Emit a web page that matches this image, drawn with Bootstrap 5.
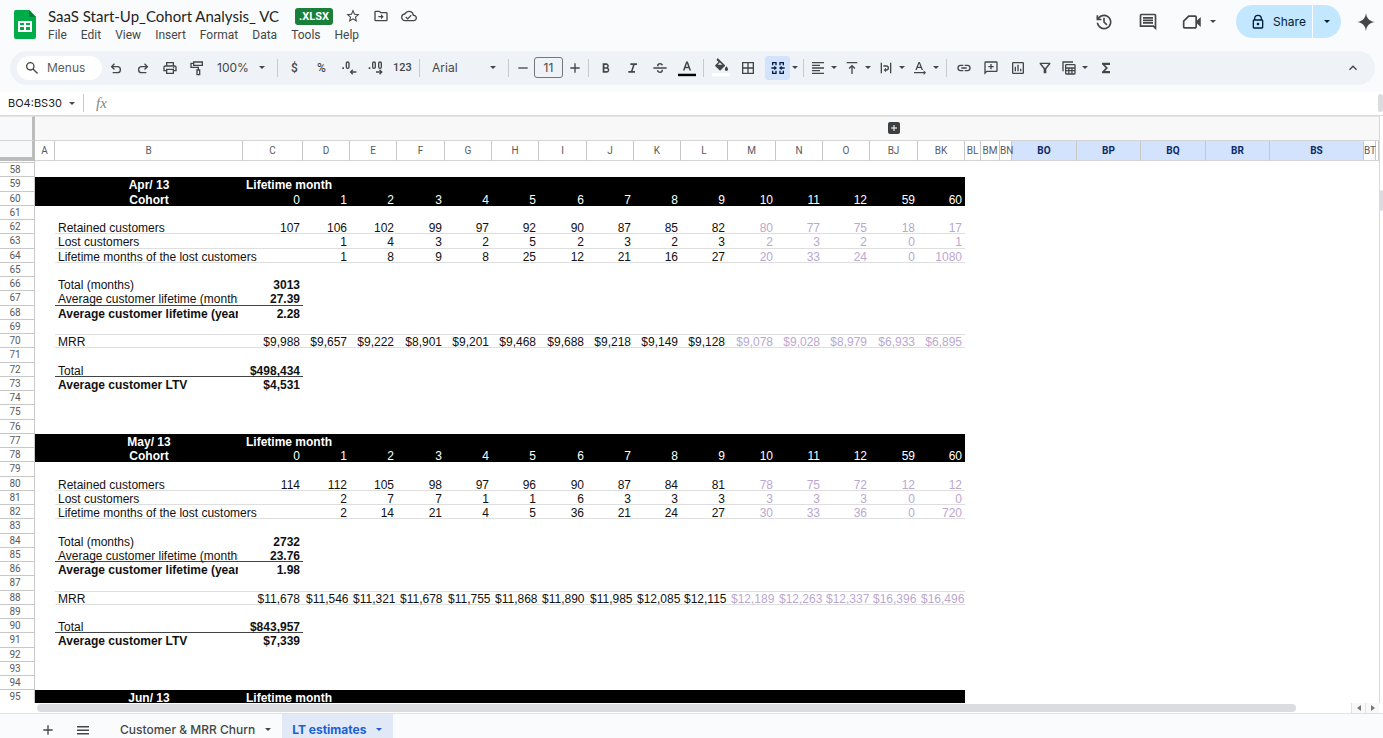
<!DOCTYPE html>
<html lang="en">
<head>
<meta charset="utf-8">
<meta name="viewport" content="width=device-width, initial-scale=1">
<title>SaaS Start-Up_Cohort Analysis_ VC</title>
<link href="https://cdn.jsdelivr.net/npm/bootstrap@5.3.0/dist/css/bootstrap.min.css" rel="stylesheet">
<style>
  :root { --ink: #444746; --line: #c8c8c8; --ui: Roboto, "Liberation Sans", sans-serif; }
  body { font-family: var(--ui); font-size: 13px; line-height: 16px; color: var(--ink); background: #f9fbfd; }
  button, select, input { font-family: inherit; color: inherit; }
  svg { display: block; fill: currentColor; flex: none; }
  .ic { width: 16px; height: 16px; }
  .ic-lg { width: 20px; height: 20px; }
  .caret { width: 6px; height: 3px; }
  .plain { border: 0; background: none; padding: 0; display: flex; align-items: center; justify-content: center; }

  .topbar { height: 51px; padding: 5px 8px 0 14px; }
  .doc-title { font-family: Lato, sans-serif; font-size: 15px; line-height: 22px; font-weight: 400; color: #1f1f1f; margin: 0; }
  .filetype { background: #188038; font-size: 11px; line-height: 17px; border-radius: 3px; padding: 0 4px; font-weight: 700; color: #fff; }
  .menus { gap: 14px; font-size: 12px; line-height: 16px; }
  .menus a { color: var(--ink); text-decoration: none; }
  .share { background: #c2e7ff; color: #001d35; border-radius: 17px; height: 33px; overflow: hidden; font-family: Inter, sans-serif; font-size: 12px; font-weight: 500; }
  .share-main { width: 76px; gap: 7px; padding-left: 8px; }
  .share-more { width: 29px; border-left: 1px solid #f9fbfd; }

  .tools { height: 34px; margin: 0 8px 7px 10px; padding: 0 9px 0 7px; background: #eff3f8; border-radius: 17px; }
  .search { width: 85px; height: 24px; background: #fff; border-radius: 12px; padding-left: 7px; gap: 7px; }
  .search input { width: 48px; border: 0; background: none; padding: 0; font-family: Inter, sans-serif; font-size: 12px; outline: 0; }
  .search input::placeholder { color: #5b5e5d; opacity: 1; }
  .tool { width: 27px; height: 24px; font-size: 12px; font-weight: 500; border-radius: 3px; }
  .tool.small-digits { font-size: 11px; }
  .tool.step { width: 21px; }
  .tool.dd { width: 34px; gap: 5px; justify-content: start; padding-left: 3px; }
  .tool.on { width: 25px; background: #d3e3fd; color: #041e49; }
  .tool.only-caret { width: 10px; }
  .sep { width: 1px; height: 18px; margin: 0 3px; background: #c7c9cc; }
  .pick { appearance: none; border: 0; height: 24px; padding: 0 0 0 7px; font-family: Inter, sans-serif; font-size: 12px;
    background: url("data:image/svg+xml,%3Csvg xmlns='http://www.w3.org/2000/svg' viewBox='0 0 8 4'%3E%3Cpath fill='%23444746' d='M0 0h8L4 4z'/%3E%3C/svg%3E") no-repeat right 9px center / 6px 3px; }
  .pick-zoom { width: 64px; }
  .pick-font { width: 82px; padding-left: 9px; }
  .size-box { width: 29px; height: 21px; margin: 0 1px; border: 1px solid #747775; border-radius: 3px; background: none; text-align: center; padding: 0; font-family: Inter, sans-serif; font-size: 12px; }

  .formula { height: 24px; background: #fff; border-bottom: 1px solid #d9dadb; padding-left: 8px; }
  .formula input { width: 61px; border: 0; padding: 0; font-family: Inter, sans-serif; font-size: 11px; color: #202124; outline: 0; }
  .fx { font: italic 15px "Liberation Serif", serif; color: #80868b; }
  .thumb { background: #dadce0; border-radius: 5px; }
  .formula .thumb { width: 5px; height: 18px; }

  .grid-wrap { min-height: 0; background: #fff; }
  .rail { width: 4px; border-left: 1px solid #d9d9d9; background: #fff; }
  .rail .thumb { height: 21px; margin-top: 74px; }
  .sheet { table-layout: fixed; width: 100%; border-collapse: separate; border-spacing: 0; }
  .sheet th, .sheet td { padding: 0; }
  .sheet thead th { font-size: 10px; line-height: 19px; font-weight: 400; color: #575b5f; text-align: center; white-space: nowrap; }
  .groups th { height: 25px; background: #f8f8f8; border-bottom: 1px solid #d4d4d4; border-top: 1px solid #e4e4e4; }
  .letters th { height: 20px; background: #fff; border-right: 1px solid var(--line); border-bottom: 1px solid #d4d4d4; }
  .sheet .letters th.sel { background: #d3e3fd; color: #0b2a66; font-weight: 700; }
  .sheet thead th.corner { background: #f8f9fa; border-right: 3px solid #bcbcbc; }
  .letters th.corner { border-bottom: 4px solid #bcbcbc; }
  .sheet tbody { font-family: "Liberation Sans", sans-serif; font-size: 12px; color: #111; }
  .sheet tbody tr { height: 14px; }
  .sheet tbody tr.tall { height: 15px; }
  .sheet tbody tr.sliver { height: 2px; }
  .num { font-family: var(--ui); font-size: 10px; line-height: 13px; font-weight: 400; color: #575b5f; text-align: center; border-right: 1px solid var(--line); border-bottom: 1px solid var(--line); }
  .sheet .num { padding-right: 4px; }
  .sliver .num { line-height: 1px; }
  .cell { height: 14px; line-height: 17px; padding: 0 3px; white-space: nowrap; }
  .val .cell { text-align: right; }
  .mid .cell { text-align: center; }
  .cut .cell { overflow-x: clip; margin-right: 5px; }
  .ink td { background: #000; color: #fff; }
  .faint { color: #baa8d0; }
  .under { box-shadow: inset 0 -1px #dedede; }
  .over { box-shadow: inset 0 1px #dedede, inset 0 -1px #dedede; }
  .rule { box-shadow: inset 0 -1px #444; }
  .plus-mark { width: 12px; height: 12px; margin: 0 auto; color: #3c4043; }

  .hscroll { height: 10px; background: #fff; padding-left: 37px; }
  .hscroll .thumb { width: calc(100% - 55px); height: 8px; }
  .arrow { width: 14px; height: 10px; border-left: 1px solid #e3e3e3; background: #f8f8f8; color: #777; }
  .tabs { height: 25px; border-top: 1px solid #dfe1e4; font-family: Inter, sans-serif; padding-left: 34px; }
  .tabs .plain { font-size: 12px; font-weight: 500; height: 24px; padding-top: 7px; }
  .tabs .w { width: 27px; }
  .tabs .tab { gap: 10px; padding-left: 10px; padding-right: 11px; }
  .tabs .tab.current { background: #e1e9f7; color: #1a5fd0; font-weight: 700; }
</style>
</head>
<body class="vh-100 d-flex flex-column overflow-hidden">
<svg width="0" height="0" class="position-absolute" aria-hidden="true">
  <symbol id="caret" viewBox="0 0 8 4"><path d="M0 0h8L4 4z"/></symbol>
</svg>

<header class="topbar d-flex align-items-start">
  <svg class="mt-1" width="22" height="31" viewBox="0 0 22 31" aria-label="Sheets"><path fill="#00ac47" d="M2 1h13l7 7v20a2 2 0 0 1-2 2H2a2 2 0 0 1-2-2V3a2 2 0 0 1 2-2z"/><path fill="#00832d" d="M15 1l7 7h-5a2 2 0 0 1-2-2z"/><path fill="#fff" fill-rule="evenodd" d="M4 12h14v11H4zm2 2v2h4v-2zm6 0v2h4v-2zm-6 4v3h4v-3zm6 0v3h4v-3z"/></svg>
  <div class="ms-2 ps-1">
    <div class="d-flex align-items-center">
      <h1 class="doc-title">SaaS Start-Up_Cohort Analysis_ VC</h1>
      <span class="filetype ms-3">.XLSX</span>
      <button class="plain ms-2 ps-1" aria-label="Star"><svg width="16" height="16" viewBox="0 0 24 24"><path d="M22 9.240l-7.190-.62L12 2 9.190 8.630 2 9.240l5.460 4.730L5.820 21 12 17.270 18.180 21l-1.630-7.030L22 9.240zM12 15.400l-3.760 2.270 1-4.280-3.320-2.880 4.380-.38L12 6.100l1.710 4.040 4.380.38-3.320 2.880 1 4.280L12 15.400z"/></svg></button>
      <button class="plain ms-2 ps-1" aria-label="Move"><svg width="16" height="16" viewBox="0 0 24 24"><path d="M20 6h-8l-2-2H4a2 2 0 0 0-2 2v12a2 2 0 0 0 2 2h16a2 2 0 0 0 2-2V8a2 2 0 0 0-2-2zm0 12H4V6h5.200l2 2H20zm-8-1l4-4-4-4v3H8v2h4z"/></svg></button>
      <button class="plain ms-2 ps-1" aria-label="Saved to Drive"><svg width="16" height="16" viewBox="0 0 24 24"><path d="M19.350 10.040A7.490 7.490 0 0 0 12 4C9.110 4 6.600 5.640 5.350 8.040A5.990 5.990 0 0 0 0 14c0 3.310 2.690 6 6 6h13c2.760 0 5-2.240 5-5 0-2.640-2.050-4.780-4.650-4.960zM19 18H6c-2.210 0-4-1.790-4-4 0-2.050 1.530-3.760 3.560-3.970l1.070-.11.5-.95A5.470 5.470 0 0 1 12 6c2.620 0 4.880 1.860 5.390 4.430l.3 1.500 1.530.11A2.980 2.980 0 0 1 22 15c0 1.650-1.350 3-3 3zm-9-3.180l-2.090-2.090L6.500 14.140 10 17.650l6.010-6.010-1.410-1.410z"/></svg></button>
    </div>
    <nav class="menus d-flex"><a href="#">File</a><a href="#">Edit</a><a href="#">View</a><a href="#">Insert</a><a href="#">Format</a><a href="#">Data</a><a href="#">Tools</a><a href="#">Help</a></nav>
  </div>
  <div class="d-flex align-items-center ms-auto">
    <button class="plain me-4" aria-label="Version history"><svg class="ic-lg" viewBox="0 0 24 24"><path d="M12 21a9 9 0 0 1-8.950-8h2.050A7 7 0 1 0 6.250 8H9v2H3V4h2v2.350A9 9 0 1 1 12 21zm2.800-4.800L11 12.400V7h2v4.600l3.200 3.200z"/></svg></button>
    <button class="plain me-4" aria-label="Comments"><svg class="ic-lg" viewBox="0 0 24 24"><path d="M6 14h12v-2H6zm0-3h12V9H6zm0-3h12V6H6zM2 18V4a2 2 0 0 1 2-2h16a2 2 0 0 1 2 2v18l-4-4zm2-2h14.800l1.200 1.200V4H4z"/></svg></button>
    <button class="plain me-3 gap-2 pe-1" aria-label="Join a call"><svg class="ic-lg" viewBox="0 0 24 24"><path fill="none" stroke="currentColor" stroke-width="2" stroke-linejoin="round" d="M8 5h8a1 1 0 0 1 1 1v12a1 1 0 0 1-1 1H3a1 1 0 0 1-1-1v-7z"/><path d="M17 11l5.500-5v12L17 13z"/></svg><svg class="caret"><use href="#caret"/></svg></button>
    <div class="share d-flex me-3">
      <button class="plain share-main"><svg width="16" height="16" viewBox="0 0 24 24"><path fill-rule="evenodd" d="M6 8V7a6 6 0 0 1 12 0v1a2 2 0 0 1 2 2v10a2 2 0 0 1-2 2H6a2 2 0 0 1-2-2V10a2 2 0 0 1 2-2zm2 0h8V7a4 4 0 0 0-8 0zm-2 2v10h12V10zm6 3a2 2 0 1 1 0 4 2 2 0 0 1 0-4z"/></svg>Share</button>
      <button class="plain share-more" aria-label="Share options"><svg class="caret"><use href="#caret"/></svg></button>
    </div>
    <button class="plain" aria-label="Gemini"><svg width="18" height="18" viewBox="0 0 24 24"><path d="M12 0c1 7.500 4.500 11 12 12-7.500 1-11 4.500-12 12-1-7.500-4.500-11-12-12 7.500-1 11-4.500 12-12z"/></svg></button>
  </div>
</header>

<div class="tools d-flex align-items-center" role="toolbar">
  <label class="search d-flex align-items-center"><svg class="ic" viewBox="0 0 24 24"><path d="M19.600 21l-6.300-6.300A6.500 6.500 0 1 1 14.700 13.300L21 19.600zM9.500 14a4.500 4.500 0 1 0 0-9 4.500 4.500 0 0 0 0 9z"/></svg><input type="text" placeholder="Menus" aria-label="Search the menus"></label>
  <button class="plain tool" aria-label="Undo"><svg class="ic" viewBox="0 0 24 24"><path d="M7 20v-2h7.100a3.500 3.500 0 0 0 0-7H7.800l2.600 2.600L9 15l-5-5 5-5 1.400 1.400L7.800 9h6.300a5.500 5.500 0 0 1 0 11z"/></svg></button>
  <button class="plain tool" aria-label="Redo"><svg class="ic" viewBox="0 0 24 24"><path d="M17 20v-2H9.900a3.500 3.500 0 0 1 0-7h6.300l-2.600 2.600L15 15l5-5-5-5-1.400 1.400L16.200 9H9.900a5.500 5.500 0 0 0 0 11z"/></svg></button>
  <button class="plain tool" aria-label="Print"><svg class="ic" viewBox="0 0 24 24"><path fill-rule="evenodd" d="M6 3h12v5h1a3 3 0 0 1 3 3v6h-4v4H6v-4H2v-6a3 3 0 0 1 3-3h1zm2 2v3h8V5zM5 10a1 1 0 0 0-1 1v4h2v-2h12v2h2v-4a1 1 0 0 0-1-1zm3 5v4h8v-4zm9.500-4.500a1 1 0 1 1 0 2 1 1 0 0 1 0-2z"/></svg></button>
  <button class="plain tool" aria-label="Paint format"><svg class="ic" viewBox="0 0 24 24"><path fill="none" stroke="currentColor" stroke-width="2" d="M7 3h13v5H7zM7 5H3v6h11v4M12 15h4v7h-4z"/></svg></button>
  <select class="pick pick-zoom" aria-label="Zoom"><option>100%</option></select>
  <span class="sep"></span>
  <button class="plain tool">$</button>
  <button class="plain tool">%</button>
  <button class="plain tool" aria-label="Decrease decimal places"><svg class="ic" viewBox="0 0 24 24"><path fill-rule="evenodd" d="M2 11h2.500v2.500H2zM10 2a3 3 0 0 1 3 3v5.500a3 3 0 0 1-6 0V5a3 3 0 0 1 3-3zm0 2a1 1 0 0 0-1 1v5.500a1 1 0 0 0 2 0V5a1 1 0 0 0-1-1zM17 14l1.400 1.400L16.800 17H23v2h-6.200l1.600 1.600L17 22l-4-4z"/></svg></button>
  <button class="plain tool" aria-label="Increase decimal places"><svg class="ic" viewBox="0 0 24 24"><path fill-rule="evenodd" d="M1 11h2.500v2.500H1zM9 2a3 3 0 0 1 3 3v5.500a3 3 0 0 1-6 0V5a3 3 0 0 1 3-3zm0 2a1 1 0 0 0-1 1v5.500a1 1 0 0 0 2 0V5a1 1 0 0 0-1-1zM18 2a3 3 0 0 1 3 3v5.500a3 3 0 0 1-6 0V5a3 3 0 0 1 3-3zm0 2a1 1 0 0 0-1 1v5.500a1 1 0 0 0 2 0V5a1 1 0 0 0-1-1zM18 14l4 4-4 4-1.400-1.400 1.600-1.600H12v-2h6.200l-1.600-1.600z"/></svg></button>
  <button class="plain tool small-digits">123</button>
  <span class="sep"></span>
  <select class="pick pick-font" aria-label="Font"><option>Arial</option></select>
  <span class="sep"></span>
  <button class="plain tool step" aria-label="Decrease font size"><svg class="ic" viewBox="0 0 24 24"><path d="M5 11h14v2H5z"/></svg></button>
  <input class="size-box" type="text" value="11" aria-label="Font size">
  <button class="plain tool step" aria-label="Increase font size"><svg class="ic" viewBox="0 0 24 24"><path d="M5 11h6V5h2v6h6v2h-6v6h-2v-6H5z"/></svg></button>
  <span class="sep"></span>
  <button class="plain tool" aria-label="Bold"><svg class="ic" viewBox="0 0 24 24"><path fill-rule="evenodd" d="M7 5h5.500a4 4 0 0 1 2.700 6.700A4 4 0 0 1 13 19H7zm2.700 2.400v3.400h2.700a1.700 1.700 0 0 0 0-3.400zm0 5.700v3.500h3.200a1.700 1.700 0 0 0 0-3.500z"/></svg></button>
  <button class="plain tool" aria-label="Italic"><svg class="ic" viewBox="0 0 24 24"><path d="M5 19v-2.500h4L12 7.500H8V5h10v2.500h-3.500l-3 9H15V19z"/></svg></button>
  <button class="plain tool" aria-label="Strikethrough"><svg class="ic" viewBox="0 0 24 24"><path d="M2 11h20v2H2zM7.500 9.500C7 6.500 9 4.500 12 4.500c2.300 0 4 1.100 4.600 3.100l-2.200.8c-.3-1.100-1.200-1.700-2.400-1.700-1.500 0-2.500 1-2.200 2.800zM16.500 14.500c.4 3-1.500 5-4.500 5-2.400 0-4.300-1.300-4.900-3.700l2.200-.8c.4 1.500 1.300 2.300 2.700 2.300 1.700 0 2.600-1 2.200-2.800z"/></svg></button>
  <button class="plain tool" aria-label="Text colour"><svg width="20" height="18" viewBox="0 0 24 22"><path fill="#000" d="M1 18h22v3H1z"/><path fill-rule="evenodd" d="M7 14l4-11h2l4 11h-2l-1-2.800h-4L9 14zm3.600-4.600h2.800L12 5.400z"/></svg></button>
  <span class="sep"></span>
  <button class="plain tool" aria-label="Fill colour"><svg width="20" height="22" viewBox="0 0 24 26"><path fill="#fff" d="M1 19h22v4H1z"/><path fill-rule="evenodd" d="M8 1l8.500 8.500a1 1 0 0 1 0 1.400L11.600 15.800a1 1 0 0 1-1.400 0L5.300 10.900a1 1 0 0 1 0-1.400L9 5.800 6.600 3.400zM10.600 6.500L8 9.200h5.600zM18.500 11s2 2.300 2 3.500a2 2 0 0 1-4 0c0-1.200 2-3.500 2-3.500z"/></svg></button>
  <button class="plain tool" aria-label="Borders"><svg class="ic" viewBox="0 0 24 24"><path fill-rule="evenodd" d="M3 3h18v18H3zm2 2v6h6V5zm8 0v6h6V5zm-8 8v6h6v-6zm8 0v6h6v-6z"/></svg></button>
  <button class="plain tool on ms-1" aria-label="Merge cells"><svg class="ic" viewBox="0 0 24 24"><path d="M3 3h7v5H8V5H5v3H3zm11 0h7v5h-2V5h-3v3h-2zM3 16h2v3h3v-3h2v5H3zm11 0h2v3h3v-3h2v5h-7zM2 11h4.500V8.500L10.500 12l-4 3.500V13H2zm20 0v2h-4.500v2.500l-4-3.500 4-3.500V11z"/></svg></button>
  <button class="plain tool only-caret" aria-label="Merge options"><svg class="caret"><use href="#caret"/></svg></button>
  <span class="sep"></span>
  <button class="plain tool dd" aria-label="Horizontal align"><svg class="ic" viewBox="0 0 24 24"><path d="M3 3h18v2H3zm0 4h12v2H3zm0 4h18v2H3zm0 4h12v2H3zm0 4h18v2H3z"/></svg><svg class="caret"><use href="#caret"/></svg></button>
  <button class="plain tool dd" aria-label="Vertical align"><svg class="ic" viewBox="0 0 24 24"><path d="M4 3h16v2H4zm8 4l5 5-1.400 1.400-2.600-2.600V21h-2V10.800l-2.600 2.600L7 12z"/></svg><svg class="caret"><use href="#caret"/></svg></button>
  <button class="plain tool dd" aria-label="Text wrapping"><svg class="ic" viewBox="0 0 24 24"><path d="M4 4h2v16H4zm14 0h2v16h-2zM8 8h4.500a4 4 0 0 1 0 8H12v2.500L8.500 15l3.500-3.500V14h.5a2 2 0 0 0 0-4H8z"/></svg><svg class="caret"><use href="#caret"/></svg></button>
  <button class="plain tool dd" aria-label="Text rotation"><svg class="ic" viewBox="0 0 24 24"><path fill-rule="evenodd" d="M5 15L9.800 3h2L16.500 15h-2.100l-1.100-3H8.200l-1.100 3zm3.900-4.800h3.700l-1.800-5zM3 18h14.500v-2.500L21 19l-3.500 3.500V20H3z"/></svg><svg class="caret"><use href="#caret"/></svg></button>
  <span class="sep"></span>
  <button class="plain tool" aria-label="Insert link"><svg class="ic" viewBox="0 0 24 24"><path d="M11 17H7A5 5 0 0 1 7 7h4v2H7a3 3 0 0 0 0 6h4zm-3-4v-2h8v2zm5 4v-2h4a3 3 0 0 0 0-6h-4V7h4a5 5 0 0 1 0 10z"/></svg></button>
  <button class="plain tool" aria-label="Insert comment"><svg class="ic" viewBox="0 0 24 24"><path fill-rule="evenodd" d="M2 22V4a2 2 0 0 1 2-2h16a2 2 0 0 1 2 2v12a2 2 0 0 1-2 2H6zm2-4.800L5.200 16H20V4H4zM11 14v-3H8V9h3V6h2v3h3v2h-3v3z"/></svg></button>
  <button class="plain tool" aria-label="Insert chart"><svg class="ic" viewBox="0 0 24 24"><path fill-rule="evenodd" d="M5 3h14a2 2 0 0 1 2 2v14a2 2 0 0 1-2 2H5a2 2 0 0 1-2-2V5a2 2 0 0 1 2-2zm0 2v14h14V5zm2 5h2v7H7zm4-3h2v10h-2zm4 6h2v4h-2z"/></svg></button>
  <button class="plain tool" aria-label="Create a filter"><svg class="ic" viewBox="0 0 24 24"><path fill-rule="evenodd" d="M4 4h16v2l-6 7.500V20h-4v-6.500L4 6zm2.800 2L12 12.500 17.200 6z"/></svg></button>
  <button class="plain tool dd" aria-label="Filter views"><svg class="ic" viewBox="0 0 24 24"><path fill-rule="evenodd" d="M2 2h16v2H4v13H2zM8 6h12a2 2 0 0 1 2 2v12a2 2 0 0 1-2 2H8a2 2 0 0 1-2-2V8a2 2 0 0 1 2-2zm0 2v3h12V8zm0 5v2h2.700v-2zm4.700 0v2h2.700v-2zm4.700 0v2H20v-2zM8 17v3h2.700v-3zm4.700 0v3h2.700v-3zm4.700 0v3H20v-3z"/></svg><svg class="caret"><use href="#caret"/></svg></button>
  <button class="plain tool" aria-label="Functions"><svg class="ic" viewBox="0 0 24 24"><path d="M6 4h12v3.500h-7.500L15 12l-4.500 4.500H18V20H6v-2.500l5.500-5.500L6 6.500z"/></svg></button>
  <button class="plain tool ms-auto" aria-label="Hide the menus"><svg class="ic" viewBox="0 0 24 24"><path d="M7.400 15.400L6 14l6-6 6 6-1.400 1.400-4.600-4.600z"/></svg></button>
</div>

<div class="formula d-flex align-items-center">
  <input type="text" value="BO4:BS30" aria-label="Name box">
  <svg class="caret"><use href="#caret"/></svg>
  <span class="sep mx-2"></span>
  <span class="fx ps-1">fx</span>
  <span class="thumb ms-auto"></span>
</div>

<main class="grid-wrap flex-fill d-flex overflow-hidden">
  <div class="flex-fill overflow-hidden">
    <table class="sheet">
      <colgroup id="cols"></colgroup>
      <thead>
        <tr class="groups" id="groups"></tr>
        <tr class="letters" id="letters"></tr>
      </thead>
      <tbody id="rows"></tbody>
    </table>
  </div>
  <div class="rail flex-shrink-0 d-flex flex-column"><span class="thumb"></span></div>
</main>

<div class="hscroll d-flex align-items-center pe-1">
  <div class="flex-fill"><div class="thumb"></div></div>
  <button class="plain arrow" aria-label="Scroll left"><svg width="4" height="6" viewBox="0 0 4 6"><path d="M4 0v6L0 3z"/></svg></button>
  <button class="plain arrow" aria-label="Scroll right"><svg width="4" height="6" viewBox="0 0 4 6"><path d="M0 0v6l4-3z"/></svg></button>
</div>

<footer class="tabs d-flex">
  <button class="plain w" aria-label="Add sheet"><svg class="ic" viewBox="0 0 24 24"><path d="M5 11h6V5h2v6h6v2h-6v6h-2v-6H5z"/></svg></button>
  <button class="plain w ms-2" aria-label="All sheets"><svg width="12" height="10" viewBox="0 0 12 10"><path d="M0 1h12v1.500H0zm0 3.500h12V6H0zM0 8h12v1.500H0z"/></svg></button>
  <button class="plain tab ms-2 ps-3">Customer &amp; MRR Churn<svg class="caret"><use href="#caret"/></svg></button>
  <button class="plain tab current">LT estimates<svg class="caret"><use href="#caret"/></svg></button>
</footer>

<script>
  const columns = [['A', 20], ['B', 188], ['C', 60],
    ['D', 47], ['E', 47], ['F', 48], ['G', 47], ['H', 47], ['I', 48], ['J', 47], ['K', 47], ['L', 47],
    ['M', 48], ['N', 47], ['O', 47], ['BJ', 48], ['BK', 47], ['BL', 16], ['BM', 19], ['BN', 12],
    ['BO', 65], ['BP', 64], ['BQ', 65], ['BR', 64], ['BS', 94], ['BT', 12]];
  const selected = ['BO', 'BP', 'BQ', 'BR', 'BS'];
  const months = ['0','1','2','3','4','5','6','7','8','9','10','11','12','59','60'];
  const cohorts = [
    { start: 59, name: 'Apr/ 13',
      retained: '107 106 102 99 97 92 90 87 85 82 80 77 75 18 17',
      lost: '- 1 4 3 2 5 2 3 2 3 2 3 2 0 1',
      life: '- 1 8 9 8 25 12 21 16 27 20 33 24 0 1080',
      total: '3013', avgMonths: '27.39', avgYears: '2.28',
      mrr: '$9,988 $9,657 $9,222 $8,901 $9,201 $9,468 $9,688 $9,218 $9,149 $9,128 $9,078 $9,028 $8,979 $6,933 $6,895',
      sum: '$498,434', ltv: '$4,531' },
    { start: 77, name: 'May/ 13',
      retained: '114 112 105 98 97 96 90 87 84 81 78 75 72 12 12',
      lost: '- 2 7 7 1 1 6 3 3 3 3 3 3 0 0',
      life: '- 2 14 21 4 5 36 21 24 27 30 33 36 0 720',
      total: '2732', avgMonths: '23.76', avgYears: '1.98',
      mrr: '$11,678 $11,546 $11,321 $11,678 $11,755 $11,868 $11,890 $11,985 $12,085 $12,115 $12,189 $12,263 $12,337 $16,396 $16,496',
      sum: '$843,957', ltv: '$7,339' },
    { start: 95, name: 'Jun/ 13' }];

  const td = (text, cls = '') => `<td class="${cls}"><div class="cell">${text}</div></td>`;
  const series = (label, data, line) => td('') + td(label, line) +
    data.split(' ').map((v, i) => td(v === '-' ? '' : v, `val ${line} ${i > 9 ? 'faint' : ''}`)).join('');
  const pair = (label, value, line = '', weight = '') => td('') + td(label, `cut ${line} ${weight}`) + td(value, `val fw-bold ${line}`);

  const content = {};
  for (const c of cohorts) {
    const s = c.start;
    content[s] = { cls: 'ink', html: td('') + td(c.name, 'mid fw-bold') + td('Lifetime month', 'fw-bold') + td('').repeat(14) };
    if (!c.mrr) continue;
    content[s + 1] = { cls: 'ink', html: td('') + td('Cohort', 'mid fw-bold') + months.map(m => td(m, 'val')).join('') };
    content[s + 3] = { html: series('Retained customers', c.retained, 'under') };
    content[s + 4] = { html: series('Lost customers', c.lost, 'under') };
    content[s + 5] = { html: series('Lifetime months of the lost customers', c.life, 'under') };
    content[s + 7] = { html: pair('Total (months)', c.total) };
    content[s + 8] = { html: pair('Average customer lifetime (months)', c.avgMonths, 'rule') };
    content[s + 9] = { html: pair('Average customer lifetime (years)', c.avgYears, '', 'fw-bold') };
    content[s + 11] = { html: series('MRR', c.mrr, 'over') };
    content[s + 13] = { html: pair('Total', c.sum, 'rule') };
    content[s + 14] = { html: pair('Average customer LTV', c.ltv, '', 'fw-bold') };
  }

  const plus = '<svg class="plus-mark" viewBox="0 0 12 12"><rect width="12" height="12" rx="2"/><path fill="#fff" d="M3 5.500h2.500V3h1v2.500H9v1H6.500V9h-1V6.500H3z"/></svg>';
  document.getElementById('cols').innerHTML = '<col style="width:35px">' +
    columns.map(([, w]) => `<col style="width:${w}px">`).join('') + '<col>';
  document.getElementById('groups').innerHTML = '<th class="corner"></th>' +
    columns.map(([n]) => `<th>${n === 'BJ' ? plus : ''}</th>`).join('') + '<th></th>';
  document.getElementById('letters').innerHTML = '<th class="corner"></th>' +
    columns.map(([n]) => `<th class="${selected.includes(n) ? 'sel' : ''}">${n}</th>`).join('') + '<th></th>';
  let html = '<tr class="sliver"><th class="num"></th></tr>';
  for (let r = 58; r < 96; r++) {
    const row = content[r] || { html: '' };
    html += `<tr class="${row.cls || ''} ${r % 4 === 3 ? 'tall' : ''}"><th class="num">${r}</th>${row.html}</tr>`;
  }
  document.getElementById('rows').innerHTML = html;
</script>
<script src="https://cdn.jsdelivr.net/npm/bootstrap@5.3.0/dist/js/bootstrap.bundle.min.js"></script>
</body>
</html>
